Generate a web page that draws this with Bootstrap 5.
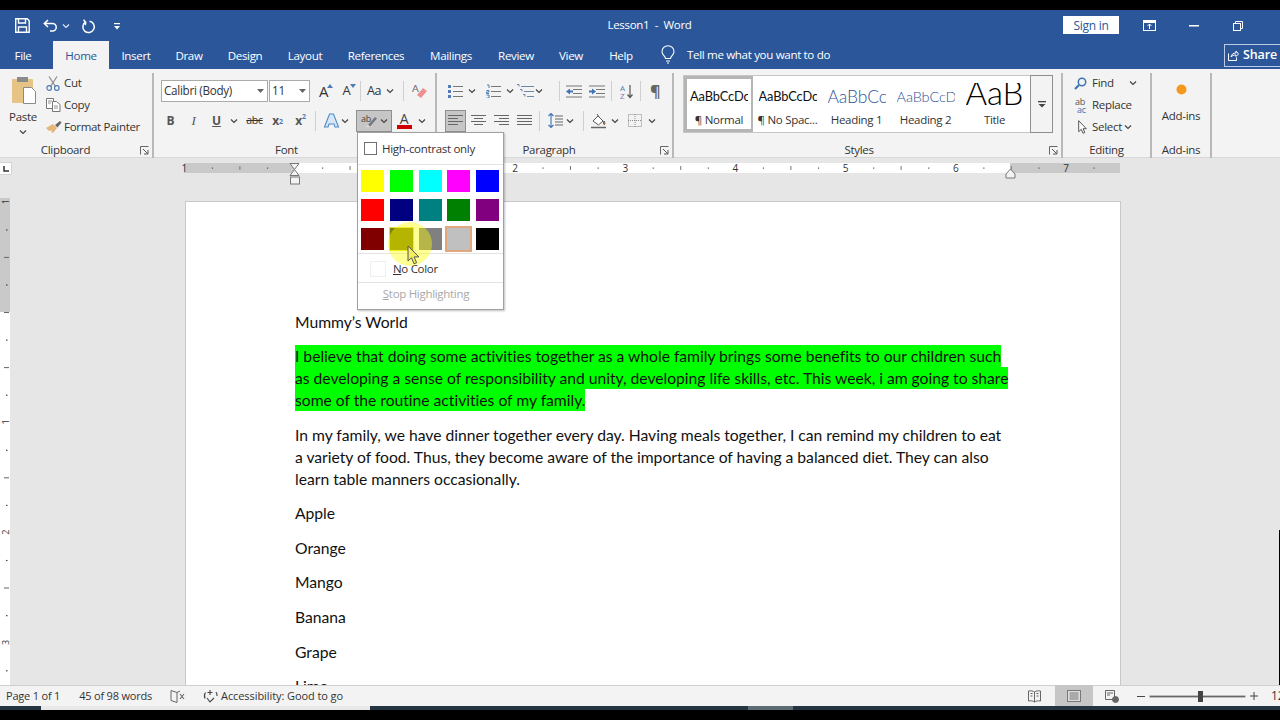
<!DOCTYPE html>
<html lang="en">
<head>
<meta charset="UTF-8">
<title>Lesson1 - Word</title>
<link href="https://cdn.jsdelivr.net/npm/bootstrap@5.3.0/dist/css/bootstrap.min.css" rel="stylesheet">
<style>
  html, body { height: 720px; overflow: hidden; background: #000; }
  body { font-family: "Open Sans", "Liberation Sans", sans-serif; font-size: 11.5px; color: #333; letter-spacing: -.3px; }
  svg { display: block; flex: none; overflow: visible; }
  .wd-app { width: 1280px; height: 720px; }
  .wd-top { height: 10px; background: #000; }
  .wd-title { height: 31px; background: #2b579a; color: #fff; }
  .wd-qat { width: 400px; padding-left: 15px; }
  .wd-doc-name { position: absolute; left: 0; right: 0; top: 0; line-height: 30px; text-align: center; padding-left: 19px; font-size: 11.5px; }
  .wd-signin { width: 56px; height: 18px; background: #fff; color: #2b579a; line-height: 19px; text-align: center; font-size: 12px; margin-top: -2px; }
  .wd-tabs { height: 28px; background: #2b579a; color: #fff; font-size: 11.6px; letter-spacing: -.35px; }
  .wd-tab { line-height: 29px; text-align: center; }
  .wd-tab.on { background: #f3f3f3; color: #2b579a; }
  .wd-share { width: 56px; height: 23px; border: 1px solid #b9cbe6; border-right: 0; margin-top: 3px; font-weight: 600; font-size: 12.5px; letter-spacing: -.1px; }
  .wd-ribbon { height: 89px; background: #f3f3f3; border-bottom: 1px solid #d8d8d8; }
  .wd-grp { height: 85px; margin-top: 4px; border-right: 2px solid #b8b8b8; flex: none; }
  .wd-grp-body { height: 68px; }
  .wd-grp-label { height: 17px; line-height: 17px; text-align: center; font-size: 11.5px; }
  .wd-launch { position: absolute; right: 3px; bottom: 3px; }
  .wd-tb { height: 21px; flex: none; font-size: 12px; }
  .wd-chev { width: 12px; }
  .wd-vsep { width: 1px; height: 20px; background: #cfcfcf; flex: none; }
  .wd-on { background: #c6c6c6; border: 1px solid #8f8f8f; }
  .wd-combo { height: 22px; background: #fff; border: 1px solid #ababab; padding: 0 3px 0 2px; font-size: 11.7px; flex: none; }
  .wd-line { height: 22px; padding-left: 3px; }
  .wd-gallery { width: 370px; height: 58px; margin-left: 9px; background: #fff; border: 1px solid #c6c6c6; }
  .wd-style { height: 56px; overflow: hidden; text-align: center; flex: none; }
  .wd-style.on { background: #fff; border: 3px solid #b5b5b5; border-right-width: 2px; }
  .wd-prev { width: 58px; height: 35px; margin: 0 auto; text-align: left; line-height: 41px; font-family: Lato, "Liberation Sans", sans-serif; font-size: 12.8px; color: #111; white-space: nowrap; overflow: hidden; letter-spacing: -.1px; }
  .wd-style.on .wd-prev { height: 32px; line-height: 35px; }
  .wd-h1 { font-size: 17.5px; font-weight: 300; color: #2f5496; }
  .wd-h2 { font-size: 14.5px; font-weight: 300; color: #2f5496; }
  .wd-ttl { font-size: 33px; font-weight: 300; color: #000; line-height: 18px; height: 28px; margin-top: 7px; }
  .wd-more { width: 23px; height: 58px; border: 1px solid #8f8f8f; margin: -1px -1px 0 0; background: #f3f3f3; }
  .wd-work { background: #e6e6e6; height: 527px; }
  .wd-hrule-row { height: 40px; padding-top: 4px; }
  .wd-tabstop { width: 12px; height: 13px; background: #fff; border: 1px solid #d4d4d4; border-left: 0; margin-right: 172px; }
  .wd-hrule { margin-top: 1px; }
  .wd-vrule { width: 10px; height: 487px; }
  .wd-page { width: 936px; height: 600px; margin: 3px 0 0 175px; background: #fff; border: 1px solid #c8c8c8; padding: 108.500px 0 0 109px; font-family: Lato, "Liberation Sans", sans-serif; font-size: 15.7px; color: #111; line-height: 22px; letter-spacing: -.02px; }
  .wd-page p { margin: 0 0 12.6px; white-space: nowrap; }
  .wd-hl { background: #00ff00; padding: 2px 0; }
  .wd-scroll { position: absolute; right: 0; top: 372px; width: 1px; height: 155px; background: #000; }
  .wd-menu { position: absolute; left: 357px; top: 132px; width: 147px; height: 178px; background: #fff; border: 1px solid #a0a0a0; box-shadow: 1px 1px 2px rgba(0,0,0,.25); z-index: 5; }
  .wd-menu-hc { height: 32px; padding-left: 6px; gap: 3px; border-bottom: 1px solid #e3e3e3; font-size: 11.5px; }
  .wd-check { width: 13px; height: 13px; border: 1px solid #707070; background: #fff; }
  .wd-swatches { display: grid; grid-template-columns: repeat(5, 23px); grid-auto-rows: 22px; gap: 7px 5.800px; padding: 5px 0 0 3px; height: 89px; border-bottom: 1px solid #e3e3e3; }
  .wd-sw { width: 23px; height: 22px; }
  .wd-sw.sel { outline: 2px solid #e2a77c; box-shadow: 0 0 0 3px #fff; }
  .wd-sw.hov { outline: 1px solid #e9e23a; }
  .wd-menu-no { height: 29px; padding: 2px 0 0 12px; gap: 7px; border-bottom: 1px solid #e3e3e3; }
  .wd-nocolor { width: 16px; height: 16px; border: 1px solid #efefef; }
  .wd-menu-stop { height: 26px; text-align: center; line-height: 22px; padding-right: 9px; color: #a8a8a8; }
  .wd-spot { position: absolute; left: 388px; top: 222px; width: 44px; height: 44px; border-radius: 50%; background: rgba(255,255,0,.42); filter: blur(.6px); z-index: 6; }
  .wd-cursor { position: absolute; left: 407px; top: 245px; z-index: 7; }
  .wd-status { height: 21px; background: #f3f3f3; border-top: 1px solid #cfcfcf; font-size: 11px; letter-spacing: -.2px; }
  .wd-status span { flex: none; }
  .wd-printbtn { width: 38px; height: 21px; background: #c6c6c6; margin-top: -1px; flex: none; }
  .wd-strip { height: 4px; background: #223540; }
  .wd-bottom { height: 10px; background: #000; }
</style>
</head>
<body>
<svg width="0" height="0" class="position-absolute">
  <symbol id="i-chev" viewBox="0 0 8 6"><path d="M1 1.500l3 3 3-3" fill="none" stroke="#444" stroke-width="1.200"/></symbol>
  <symbol id="i-launch" viewBox="0 0 9 9"><path d="M.5 8.500v-8h8" fill="none" stroke="#666"/><path d="M3 3l4.500 4.500M8 4v4H4" fill="none" stroke="#555"/></symbol>
  <symbol id="i-bul" viewBox="0 0 16 14"><g fill="#4f7cb5"><rect x="0" y="1" width="3" height="3"/><rect x="0" y="6" width="3" height="3"/><rect x="0" y="11" width="3" height="3"/></g><path d="M5 2.500h10M5 7.500h10M5 12.500h10" stroke="#777"/></symbol>
  <symbol id="i-num" viewBox="0 0 16 14"><path d="M1 1h2v3M.5 6.500h2.500v1.500h-2.500v1.500h2.500M.5 11h2.500v3h-2.500" fill="none" stroke="#4f7cb5"/><path d="M5 2.500h10M5 7.500h10M5 12.500h10" stroke="#777"/></symbol>
  <symbol id="i-lines" viewBox="0 0 15 13"><path d="M0 1.500h15M0 4.500h15M0 7.500h15M0 10.500h15" stroke="#666"/></symbol>
  <symbol id="i-center" viewBox="0 0 15 13"><path d="M0 1.500h15M3 4.500h9M0 7.500h15M3 10.500h9" stroke="#666"/></symbol>
  <symbol id="i-right" viewBox="0 0 15 13"><path d="M0 1.500h15M5 4.500h10M0 7.500h15M5 10.500h10" stroke="#666"/></symbol>
  <symbol id="i-left" viewBox="0 0 15 13"><path d="M0 1.500h15M0 4.500h10M0 7.500h15M0 10.500h10" stroke="#666"/></symbol>
</svg>

<div class="wd-app d-flex flex-column overflow-hidden">
  <div class="wd-top"></div>

  <div class="wd-title d-flex align-items-center position-relative">
    <div class="wd-doc-name">Lesson1 &nbsp;-&nbsp; Word</div>
    <div class="wd-qat d-flex align-items-center position-relative">
      <svg width="15" height="15" viewBox="0 0 15 15" fill="none" stroke="#fff" stroke-width="1.400"><path d="M.7.700h11.500l2 2v11.600H.7z"/><path d="M3.500 1v4h7V1M3.500 14V9h8v5"/></svg>
      <svg width="15" height="13" viewBox="0 0 15 13" fill="none" stroke="#fff" stroke-width="1.500" style="margin-left:13px"><path d="M5 1L1.300 4.500 5 8M1.500 4.500h8a3.700 3.700 0 0 1 0 7.500H7"/></svg>
      <svg class="ms-1" width="8" height="6" viewBox="0 0 8 6" fill="none" stroke="#dfe7f3" stroke-width="1.200"><path d="M1 1.500l3 3 3-3"/></svg>
      <svg width="14" height="14" viewBox="0 0 14 14" fill="none" stroke="#fff" stroke-width="1.500" style="margin-left:11px"><path d="M4.500 3a5.700 5.700 0 1 0 4-.8"/><path d="M2.500.7l2.200 2.500-.4 3"/></svg>
      <svg width="8" height="8" viewBox="0 0 8 8" fill="#fff" style="margin-left:18px"><rect x="1" y="1" width="6" height="1.200"/><path d="M1 4h6L4 7.500z"/></svg>
    </div>
    <div class="ms-auto d-flex align-items-center" style="margin-right:-4px">
      <div class="wd-signin" style="margin-right:24px">Sign in</div>
      <svg width="13" height="11" viewBox="0 0 13 11" style="margin-right:33px"><rect x=".5" y=".5" width="12" height="10" fill="none" stroke="#fff"/><rect x="1" y="1" width="11" height="2" fill="#fff"/><path d="M6.500 4v5M4.500 6l2-2 2 2" fill="none" stroke="#fff"/></svg>
      <svg width="10" height="2" viewBox="0 0 10 2" style="margin-right:34px"><rect width="10" height="1.500" fill="#fff"/></svg>
      <svg width="10" height="10" viewBox="0 0 10 10" fill="none" stroke="#fff" style="margin-right:38px"><rect x=".5" y="2.500" width="7" height="7"/><path d="M2.500 2.500v-2h7v7h-2"/></svg>
      <svg width="3" height="10" viewBox="0 0 3 10" fill="none" stroke="#fff"><path d="M0 0l5 5-5 5"/></svg>
    </div>
  </div>

  <div class="wd-tabs d-flex position-relative">
    <div class="wd-tab" style="width:46px;margin-right:7px">File</div>
    <div class="wd-tab on" style="width:56px">Home</div>
    <div class="wd-tab" style="width:54px">Insert</div>
    <div class="wd-tab" style="width:52px">Draw</div>
    <div class="wd-tab" style="width:60px">Design</div>
    <div class="wd-tab" style="width:60px">Layout</div>
    <div class="wd-tab" style="width:82px">References</div>
    <div class="wd-tab" style="width:68px">Mailings</div>
    <div class="wd-tab" style="width:62px">Review</div>
    <div class="wd-tab" style="width:48px">View</div>
    <div class="wd-tab" style="width:52px">Help</div>
    <div class="d-flex align-items-center" style="margin-left:14px;gap:12px">
      <svg width="14" height="18" viewBox="0 0 14 18" fill="none" stroke="#fff" stroke-width="1.100"><path d="M4.500 12.500c0-2.500-3.500-3.500-3.500-6.800a6 6 0 0 1 12 0c0 3.300-3.500 4.300-3.500 6.800zM5 15h4M6 17h2"/></svg>
      <span>Tell me what you want to do</span>
    </div>
    <div class="wd-share ms-auto d-flex align-items-center" style="gap:4px;padding-left:3px">
      <svg width="11" height="11" viewBox="0 0 11 11" fill="none" stroke="#fff"><path d="M.5 3.500v7h8v-3M3 7c.5-2.500 2-4 5-4V1l2.500 3L8 6.500V5C6 5 4 5.500 3 7z"/></svg>
      <span>Share</span>
    </div>
  </div>

  <div class="wd-ribbon d-flex">
    <!-- Clipboard -->
    <div class="wd-grp position-relative" style="width:154px">
      <div class="wd-grp-body d-flex" style="padding-left:8px">
        <div class="text-center" style="width:30px;padding-top:3px">
          <svg class="mx-auto" width="28" height="29" viewBox="0 0 28 29"><rect x="3" y="3" width="21" height="24" rx="1" fill="#e6c486"/><rect x="8" y="1" width="11" height="5" fill="#8b8b8b"/><path d="M14.500 11.500h8l4 4v12h-12z" fill="#fff" stroke="#8a8a8a"/></svg>
          <div style="margin-top:4px;line-height:15px">Paste</div>
          <svg class="mx-auto" style="margin-top:5px" width="8" height="6"><use href="#i-chev"/></svg>
        </div>
        <div style="margin-left:6px;margin-top:-1px">
          <div class="wd-line d-flex align-items-center" style="gap:4px;padding-left:2px">
            <svg width="14" height="15" viewBox="0 0 14 15" fill="none"><path d="M3 .5l6.500 10M11 .5l-6.500 10" stroke="#8a8a8a" stroke-width="1.200"/><circle cx="3.200" cy="12" r="2.300" stroke="#4f7cb5" stroke-width="1.200"/><circle cx="10.800" cy="12" r="2.300" stroke="#4f7cb5" stroke-width="1.200"/></svg>
            <span>Cut</span>
          </div>
          <div class="wd-line d-flex align-items-center" style="gap:3px;padding-left:2px">
            <svg width="15" height="14" viewBox="0 0 15 14" fill="#fff" stroke="#777"><path d="M.5.500h7v10h-7z"/><path d="M6.500 3.500h4l3.500 3v7h-7.500z"/><path d="M2 3h4M2 5h3M8 8h4M8 10h4" stroke-width=".8"/></svg>
            <span>Copy</span>
          </div>
          <div class="wd-line d-flex align-items-center" style="gap:2px;padding-left:2px">
            <svg width="16" height="14" viewBox="0 0 16 14"><path d="M0 8l7-4 4 4-4 5-2-1 1-2-3 1z" fill="#e2b777"/><path d="M9 5l5-4 1.500 1.500-4 5z" fill="#666"/></svg>
            <span>Format Painter</span>
          </div>
        </div>
      </div>
      <div class="wd-grp-label" style="margin-right:21px">Clipboard</div>
      <svg class="wd-launch" width="9" height="9"><use href="#i-launch"/></svg>
    </div>

    <!-- Font -->
    <div class="wd-grp position-relative" style="width:283px">
      <div class="wd-grp-body" style="padding:7px 0 0 7px">
        <div class="d-flex align-items-center" style="height:22px">
          <div class="wd-combo d-flex align-items-center justify-content-between" style="width:107px"><span>Calibri (Body)</span><svg width="7" height="4" viewBox="0 0 7 4"><path d="M0 0h7L3.500 4z" fill="#666"/></svg></div>
          <div class="wd-combo d-flex align-items-center justify-content-between" style="width:41px;margin-left:1px"><span>11</span><svg width="7" height="4" viewBox="0 0 7 4"><path d="M0 0h7L3.500 4z" fill="#666"/></svg></div>
          <div class="wd-tb d-flex justify-content-center align-items-center position-relative" style="width:23px;margin-left:2px;font-size:15px">A<svg class="position-absolute" style="right:2px;top:3px" width="6" height="4" viewBox="0 0 6 4"><path d="M0 4l3-4 3 4z" fill="#4f7cb5"/></svg></div>
          <div class="wd-tb d-flex justify-content-center align-items-center position-relative" style="width:23px;font-size:13px">A<svg class="position-absolute" style="right:2px;top:3px" width="6" height="4" viewBox="0 0 6 4"><path d="M0 0l3 4 3-4z" fill="#4f7cb5"/></svg></div>
          <div class="wd-vsep" style="margin-left:2px"></div>
          <div class="wd-tb d-flex align-items-center" style="margin-left:6px;width:34px;gap:5px;font-size:12.5px">Aa<svg width="8" height="6"><use href="#i-chev"/></svg></div>
          <div class="wd-vsep" style="margin-left:2px"></div>
          <svg style="margin-left:8px" width="16" height="16" viewBox="0 0 16 16"><text x="0" y="9" font-size="10" fill="#666" font-family="Lato">A</text><path d="M5 12l6-7 4 3-6 7z" fill="#ef8f8f"/></svg>
        </div>
        <div class="d-flex align-items-center" style="margin-top:8px;height:21px">
          <div class="wd-tb d-flex justify-content-center align-items-center fw-bold" style="width:23px;margin-left:-2px;color:#555">B</div>
          <div class="wd-tb d-flex justify-content-center align-items-center fst-italic" style="width:23px;font-family:'Liberation Serif',serif;font-size:13px;color:#555">I</div>
          <div class="wd-tb d-flex justify-content-center align-items-center fw-bold text-decoration-underline" style="width:23px;color:#555">U</div>
          <div class="wd-tb wd-chev d-flex justify-content-center align-items-center"><svg width="8" height="6"><use href="#i-chev"/></svg></div>
          <div class="wd-tb d-flex justify-content-center align-items-center text-decoration-line-through" style="width:23px;margin-left:3px;font-size:10.5px">abc</div>
          <div class="wd-tb d-flex justify-content-center align-items-center fw-bold" style="width:23px;color:#555">x<sub style="font-size:7px;color:#4f7cb5">2</sub></div>
          <div class="wd-tb d-flex justify-content-center align-items-center fw-bold" style="width:23px;color:#555">x<sup style="font-size:7px;color:#4f7cb5">2</sup></div>
          <div class="wd-vsep" style="margin-left:3px"></div>
          <svg style="margin-left:8px" width="15" height="15" viewBox="0 0 15 15"><path d="M5.500 1h4l5 13h-3.500l-1-3H5l-1 3H.5z" fill="#d8e6f5" stroke="#4f8ccc" stroke-width="1.100"/></svg>
          <div class="wd-tb wd-chev d-flex justify-content-center align-items-center"><svg width="8" height="6"><use href="#i-chev"/></svg></div>
          <div class="wd-on d-flex align-items-center justify-content-center" style="width:36px;height:22px;margin-left:5px;gap:3px">
            <svg width="16" height="14" viewBox="0 0 16 14"><text x="0" y="8" font-size="9" fill="#444" font-family="Open Sans">ab</text><path d="M7 11l7-8 2 1.500-7 8z" fill="#777"/><path d="M4 13l3-2 2 1.500-1 .5z" fill="#ddd"/></svg>
            <svg width="8" height="6"><use href="#i-chev"/></svg>
          </div>
          <div class="position-relative d-flex justify-content-center" style="width:22px;margin-left:1px;height:21px;line-height:18px;font-size:14px;color:#444">A<svg class="position-absolute" style="left:4px;bottom:2px" width="15" height="4"><rect width="15" height="4" fill="#d00000"/></svg></div>
          <div class="wd-tb wd-chev d-flex justify-content-center align-items-center" style="margin-left:1px"><svg width="8" height="6"><use href="#i-chev"/></svg></div>
        </div>
      </div>
      <div class="wd-grp-label" style="margin-right:16px">Font</div>
      <svg class="wd-launch" width="9" height="9"><use href="#i-launch"/></svg>
    </div>

    <!-- Paragraph -->
    <div class="wd-grp position-relative" style="width:237px">
      <div class="wd-grp-body" style="padding:7px 0 0 10px">
        <div class="d-flex align-items-center" style="height:22px">
          <svg style="margin-left:1px" width="16" height="14"><use href="#i-bul"/></svg>
          <svg style="margin-left:4px" width="8" height="6"><use href="#i-chev"/></svg>
          <svg style="margin-left:10px" width="16" height="14"><use href="#i-num"/></svg>
          <svg style="margin-left:4px" width="8" height="6"><use href="#i-chev"/></svg>
          <svg style="margin-left:2px" width="20" height="14" viewBox="0 0 20 14"><path d="M1 .5h2v2M5 2.500h13M4 5.500h2v2M8 7.500h10M7 10.500h2v2M11 12.500h7" fill="none" stroke="#6b87ad"/></svg>
          <svg style="margin-left:-1px" width="8" height="6"><use href="#i-chev"/></svg>
          <div class="wd-vsep" style="margin-left:16px"></div>
          <svg style="margin-left:6px" width="16" height="13" viewBox="0 0 16 13"><path d="M0 1h16M7 4.500h9M7 8.500h9M0 12h16" stroke="#777"/><path d="M0 6.500l4-3v2h3v2H4v2z" fill="#3f73b5"/></svg>
          <svg style="margin-left:7px" width="16" height="13" viewBox="0 0 16 13"><path d="M0 1h16M7 4.500h9M7 8.500h9M0 12h16" stroke="#777"/><path d="M7 6.500l-4-3v2H0v2h3v2z" fill="#3f73b5"/></svg>
          <div class="wd-vsep" style="margin-left:6px"></div>
          <svg style="margin-left:8px" width="14" height="15" viewBox="0 0 14 15"><text x="0" y="7" font-size="8" fill="#4f7cb5" font-family="Open Sans">A</text><text x="0" y="15" font-size="8" fill="#8e6ac1" font-family="Open Sans">Z</text><path d="M10 1v12M7.500 10.500l2.500 3 2.500-3" fill="none" stroke="#555" stroke-width="1.200"/></svg>
          <div class="wd-vsep" style="margin-left:6px"></div>
          <div class="fw-bold" style="margin-left:9px;font-size:16px;color:#666;line-height:20px">¶</div>
        </div>
        <div class="d-flex align-items-center" style="margin-top:8px;height:21px">
          <div class="wd-on d-flex align-items-center justify-content-center" style="width:21px;height:22px;margin-left:-2px"><svg width="15" height="13"><use href="#i-left"/></svg></div>
          <svg style="margin-left:5px" width="15" height="13"><use href="#i-center"/></svg>
          <svg style="margin-left:8px" width="15" height="13"><use href="#i-right"/></svg>
          <svg style="margin-left:8px" width="15" height="13"><use href="#i-lines"/></svg>
          <div class="wd-vsep" style="margin-left:7px"></div>
          <svg style="margin-left:8px" width="15" height="15" viewBox="0 0 15 15"><path d="M3 .5v14M.5 3l2.500-2.500L5.500 3M.5 12l2.500 2.500L5.500 12" fill="none" stroke="#3f73b5" stroke-width="1.100"/><path d="M7 3h8M7 6h8M7 9h8M7 12h8" stroke="#666"/></svg>
          <svg style="margin-left:3px" width="8" height="6"><use href="#i-chev"/></svg>
          <div class="wd-vsep" style="margin-left:9px"></div>
          <svg style="margin-left:7px" width="16" height="16" viewBox="0 0 16 16" fill="none" stroke="#555"><path d="M2 8l5-5 5 5-4.500 4z" fill="#fff"/><path d="M6 1l2 3M13 8c1 2 1.500 3 .5 3.500S12 10 13 8z" fill="#e89c3f"/><path d="M0 14.500h15" stroke="#666" stroke-width="1.500"/></svg>
          <svg style="margin-left:4px" width="8" height="6"><use href="#i-chev"/></svg>
          <svg style="margin-left:9px" width="14" height="13" viewBox="0 0 14 13" fill="none" stroke="#888" stroke-dasharray="1 1"><rect x=".5" y=".5" width="13" height="12"/><path d="M7 0v13M0 6.500h14"/></svg>
          <svg style="margin-left:6px" width="8" height="6"><use href="#i-chev"/></svg>
        </div>
      </div>
      <div class="wd-grp-label" style="margin-right:11px">Paragraph</div>
      <svg class="wd-launch" width="9" height="9"><use href="#i-launch"/></svg>
    </div>

    <!-- Styles -->
    <div class="wd-grp position-relative" style="width:389px">
      <div class="wd-grp-body" style="padding-top:2px">
        <div class="wd-gallery d-flex">
          <div class="wd-style on" style="width:69px"><div class="wd-prev">AaBbCcDc</div><div>¶ Normal</div></div>
          <div class="wd-style" style="width:69px"><div class="wd-prev">AaBbCcDc</div><div>¶ No Spac...</div></div>
          <div class="wd-style" style="width:69px"><div class="wd-prev wd-h1">AaBbCc</div><div>Heading 1</div></div>
          <div class="wd-style" style="width:69px"><div class="wd-prev wd-h2">AaBbCcD</div><div>Heading 2</div></div>
          <div class="wd-style" style="width:69px"><div class="wd-prev wd-ttl">AaB</div><div>Title</div></div>
          <div class="wd-more ms-auto d-flex align-items-center justify-content-center">
            <svg width="8" height="7" viewBox="0 0 8 7"><rect width="8" height="1.300" fill="#444"/><path d="M.5 3h7L4 6.500z" fill="#444"/></svg>
          </div>
        </div>
      </div>
      <div class="wd-grp-label" style="margin-right:17px">Styles</div>
      <svg class="wd-launch" width="9" height="9"><use href="#i-launch"/></svg>
    </div>

    <!-- Editing -->
    <div class="wd-grp" style="width:89px">
      <div class="wd-grp-body" style="margin-top:-1px;margin-bottom:1px">
        <div class="wd-line d-flex align-items-center" style="margin-left:11px;padding:0;gap:5px">
          <svg width="13" height="13" viewBox="0 0 13 13" fill="none" stroke="#3f73b5" stroke-width="1.500"><circle cx="8" cy="5" r="3.700"/><path d="M5 8l-4 4" stroke-width="2.200"/></svg>
          <span>Find</span><svg style="margin-left:10px" width="8" height="6"><use href="#i-chev"/></svg>
        </div>
        <div class="wd-line d-flex align-items-center" style="margin-left:11px;padding:0;gap:2px">
          <svg width="16" height="15" viewBox="0 0 16 15"><text x="1" y="7" font-size="9" fill="#555" font-family="Open Sans">ab</text><text x="3" y="14.500" font-size="9" fill="#3f73b5" font-family="Open Sans">ac</text></svg>
          <span>Replace</span>
        </div>
        <div class="wd-line d-flex align-items-center" style="margin-left:15px;padding:0;gap:5px">
          <svg width="9" height="14" viewBox="0 0 9 14"><path d="M.7.700v11l2.600-2.400 1.700 4 1.800-.8-1.700-3.800h3.200z" fill="#fff" stroke="#555"/></svg>
          <span class="d-flex align-items-center" style="gap:2px">Select<svg width="8" height="6"><use href="#i-chev"/></svg></span>
        </div>
      </div>
      <div class="wd-grp-label">Editing</div>
    </div>

    <!-- Add-ins -->
    <div class="wd-grp text-center" style="width:60px">
      <div class="wd-grp-body" style="padding-top:11px">
        <svg class="mx-auto" width="11" height="11" viewBox="0 0 11 11"><circle cx="5.500" cy="5.500" r="5" fill="#f5981d"/></svg>
        <div style="margin-top:13px;line-height:16px">Add-ins</div>
      </div>
      <div class="wd-grp-label">Add-ins</div>
    </div>
  </div>

  <div class="wd-work position-relative overflow-hidden">
    <div class="wd-hrule-row d-flex align-items-start">
      <div class="wd-tabstop d-flex align-items-center justify-content-center">
        <svg width="6" height="6" viewBox="0 0 6 6"><path d="M1 0v5h5" fill="none" stroke="#333" stroke-width="1.500"/></svg>
      </div>
      <svg id="hrule" class="wd-hrule" width="936" height="24" viewBox="0 0 936 24"></svg>
    </div>
    <div class="d-flex">
      <svg id="vrule" class="wd-vrule" width="10" height="487" viewBox="0 0 10 487"></svg>
      <div class="wd-page">
        <p>Mummy’s World</p>
        <p><span class="wd-hl">I believe that doing some activities together as a whole family brings some benefits to our children such</span><br><span class="wd-hl">as developing a sense of responsibility and unity, developing life skills, etc. This week, i am going to share</span><br><span class="wd-hl">some of the routine activities of my family.</span></p>
        <p>In my family, we have dinner together every day. Having meals together, I can remind my children to eat<br>a variety of food. Thus, they become aware of the importance of having a balanced diet. They can also<br>learn table manners occasionally.</p>
        <p>Apple</p>
        <p>Orange</p>
        <p>Mango</p>
        <p>Banana</p>
        <p>Grape</p>
        <p>Lime</p>
      </div>
    </div>
    <div class="wd-scroll"></div>
  </div>

  <div class="wd-status d-flex align-items-center">
    <span style="margin-left:6px">Page 1 of 1</span>
    <span style="margin-left:19px">45 of 98 words</span>
    <svg style="margin-left:18px" width="15" height="13" viewBox="0 0 15 13" fill="none" stroke="#666"><path d="M7 2.500L1 .5v10l6 2zM7 2.500l3-1.500"/><path d="M10 4l4 5M14 4l-4 5" stroke-width="1.100"/></svg>
    <svg style="margin-left:18px" width="15" height="14" viewBox="0 0 15 14" fill="none" stroke="#444" stroke-width="1.100"><path d="M2.500 3.500a6 6 0 0 0-.5 6M7 1v5M4.500 3.500h5M13 3a6 6 0 0 1 1 4"/><path d="M4 9l3 4 4-4"/></svg>
    <span style="margin-left:3px;letter-spacing:-.08px">Accessibility: Good to go</span>
    <div class="ms-auto d-flex align-items-center" style="width:252px">
      <svg width="13" height="12" viewBox="0 0 13 12" fill="none" stroke="#666"><path d="M6.500 2C5 1 3 .5.500 1v10c2.500-.5 4.500 0 6 1 1.500-1 3.500-1.500 6-1V1C10 .5 8 1 6.500 2zM6.500 2v10M2.500 3.500h2M2.500 6h2M8.500 3.500h2M8.500 6h2"/></svg>
      <div class="wd-printbtn d-flex align-items-center justify-content-center" style="margin-left:14px">
        <svg width="14" height="12" viewBox="0 0 14 12"><rect x=".5" y=".5" width="13" height="11" fill="#ddd" stroke="#777"/><path d="M2.500 3h9M2.500 5h9M2.500 7h9M2.500 9h9" stroke="#777"/></svg>
      </div>
      <svg style="margin-left:12px" width="14" height="13" viewBox="0 0 14 13" fill="none" stroke="#666"><path d="M.5.500h9v9H.5zM2 3h6M2 5h3"/><circle cx="10.500" cy="9.500" r="3" fill="#666"/></svg>
      <span style="margin-left:18px;width:8px;height:1px;background:#444"></span>
      <div class="position-relative flex-shrink-0" style="margin-left:5px;width:95px;height:1px;background:#666;box-shadow:0 0 0 .5px #888">
        <div class="position-absolute" style="left:48px;top:-5px;width:5px;height:11px;background:#444"></div>
      </div>
      <svg style="margin-left:5px" width="8" height="8" viewBox="0 0 8 8"><path d="M0 4h8M4 0v8" stroke="#444"/></svg>
      <span style="margin-left:13px;font-size:12px">120%</span>
    </div>
  </div>

  <div class="wd-strip d-flex">
    <div style="margin-left:41px;width:329px;background:#e8e8e8"></div>
    <div style="margin-left:378px;width:45px;background:#5c6b72"></div>
  </div>
  <div class="wd-bottom"></div>
</div>

<!-- highlight colour dropdown -->
<div class="wd-menu">
  <div class="wd-menu-hc d-flex align-items-center"><div class="wd-check"></div><span style="margin-left:2px">High-contrast only</span></div>
  <div class="wd-swatches" id="swatches"></div>
  <div class="wd-menu-no d-flex align-items-center"><div class="wd-nocolor"></div><span><u>N</u>o Color</span></div>
  <div class="wd-menu-stop"><u>S</u>top Highlighting</div>
</div>
<div class="wd-spot"></div>
<svg class="wd-cursor" width="13" height="21" viewBox="0 0 13 21"><path d="M1 1v15l3.500-3.200 2.500 6 2.600-1.100-2.500-5.800H12z" fill="#f3ee60" stroke="#555"/></svg>

<script>
  // palette of the highlight menu
  var colours = ['#ffff00','#00ff00','#00ffff','#ff00ff','#0000ff','#ff0000','#000080','#008080','#008000','#800080','#800000','#808000','#808080','#c0c0c0','#000000'];
  var sw = document.getElementById('swatches');
  colours.forEach(function (c) {
    var d = document.createElement('div');
    d.className = 'wd-sw' + (c === '#c0c0c0' ? ' sel' : '') + (c === '#808000' ? ' hov' : '');
    d.style.background = c;
    sw.appendChild(d);
  });

  // horizontal ruler, 110.2px per inch, origin at x=110.5 in the svg
  var h = '<rect y="0" width="936" height="10" fill="#c9c9c9"/><rect x="110" y="0" width="716" height="10" fill="#fff"/>';
  for (var i = -4; i <= 30; i++) {
    var x = 110.5 + i * 27.55;
    if (x < 0 || x > 930) continue;
    if (i % 4 === 0) {
      if (i !== 0) h += '<text x="' + x + '" y="9" font-size="10" text-anchor="middle" fill="#333" font-family="Open Sans">' + Math.abs(i / 4) + '</text>';
    } else if (i % 2 === 0) {
      h += '<rect x="' + x + '" y="3" width="1" height="4" fill="#777"/>';
    } else {
      h += '<rect x="' + x + '" y="4.500" width="1.200" height="1.200" fill="#555"/>';
    }
  }
  h += '<path d="M106 0h9l-4.500 6 4.500 6h-9l4.500-6z" fill="#f3f3f3" stroke="#777" transform="translate(0,.5)"/><rect x="106.500" y="14" width="9" height="7" fill="#f3f3f3" stroke="#777"/>';
  h += '<path d="M826.500 6l4.500 5v4h-9v-4z" fill="#f3f3f3" stroke="#777"/>';
  document.getElementById('hrule').innerHTML = h;

  // vertical ruler, same scale, origin 114px below its top
  var v = '<rect width="10" height="114" fill="#c9c9c9"/><rect y="114" width="10" height="373" fill="#fff"/>';
  for (var j = -4; j <= 14; j++) {
    var y = 114 + j * 27.55;
    if (y < 0 || y > 487) continue;
    if (j % 4 === 0 && j !== 0) {
      v += '<text transform="translate(8.500,' + y + ') rotate(-90)" font-size="9" text-anchor="middle" fill="#333" font-family="Open Sans">' + Math.abs(j / 4) + '</text>';
    } else if (j % 2 === 0) {
      v += '<rect x="4" y="' + y + '" width="5" height="1" fill="#666"/>';
    } else {
      v += '<rect x="6" y="' + y + '" width="1.500" height="1.200" fill="#444"/>';
    }
  }
  document.getElementById('vrule').innerHTML = v;
</script>
<script src="https://cdn.jsdelivr.net/npm/bootstrap@5.3.0/dist/js/bootstrap.bundle.min.js"></script>
</body>
</html>
